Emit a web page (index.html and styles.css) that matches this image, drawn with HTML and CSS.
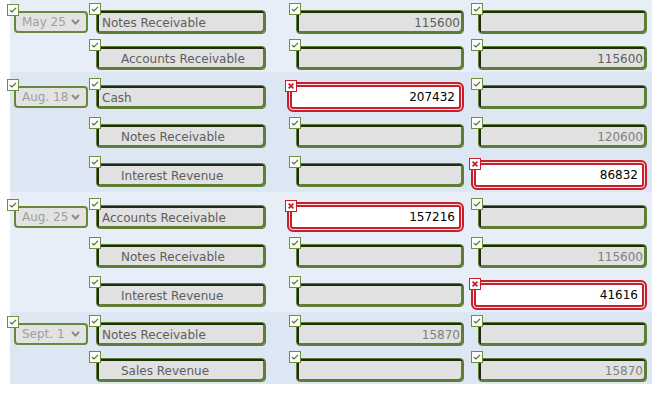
FILE: index.html
```html
<!DOCTYPE html>
<html lang="en">
<head>
    <meta charset="UTF-8">
    <title>Journal Entries</title>
    <link rel="stylesheet" href="styles.css">
</head>
<body>
    <svg class="defs" width="0" height="0">
        <symbol id="ok" viewBox="0 0 12 12">
            <rect x="0.5" y="0.5" width="11" height="11" fill="#fbfdf6" stroke="#6d8f3e"/>
            <path d="M3 6.2 L5 8 L9 3.8" fill="none" stroke="#5b6b4a" stroke-width="1.2"/>
        </symbol>
        <symbol id="bad" viewBox="0 0 12 12">
            <rect x="0.5" y="0.5" width="11" height="11" fill="#fff" stroke="#c8202b"/>
            <path d="M3.6 3.6 L8.4 8.4 M8.4 3.6 L3.6 8.4" fill="none" stroke="#c8202b" stroke-width="1.8"/>
        </symbol>
        <symbol id="chev" viewBox="0 0 9 6">
            <path d="M1 1 L4.5 4.6 L8 1" fill="none" stroke="#8a8a8a" stroke-width="2"/>
        </symbol>
    </svg>

    <div class="journal">
        <!-- May 25 -->
        <div class="entry alt">
            <div class="line">
                <div class="cell"><span class="fld"><svg class="mark"><use href="#ok"/></svg><div class="date">May 25<svg class="chev"><use href="#chev"/></svg></div></span></div>
                <div class="cell"><span class="fld"><svg class="mark"><use href="#ok"/></svg><div class="box acct">Notes Receivable</div></span></div>
                <div class="cell"><span class="fld"><svg class="mark"><use href="#ok"/></svg><div class="box num">115600</div></span></div>
                <div class="cell"><span class="fld"><svg class="mark"><use href="#ok"/></svg><div class="box num cr"></div></span></div>
            </div>
            <div class="line">
                <div class="cell"></div>
                <div class="cell"><span class="fld"><svg class="mark"><use href="#ok"/></svg><div class="box acct indent">Accounts Receivable</div></span></div>
                <div class="cell"><span class="fld"><svg class="mark"><use href="#ok"/></svg><div class="box num"></div></span></div>
                <div class="cell"><span class="fld"><svg class="mark"><use href="#ok"/></svg><div class="box num cr">115600</div></span></div>
            </div>
        </div>

        <!-- Aug. 18 -->
        <div class="entry">
            <div class="line">
                <div class="cell"><span class="fld"><svg class="mark"><use href="#ok"/></svg><div class="date">Aug. 18<svg class="chev"><use href="#chev"/></svg></div></span></div>
                <div class="cell"><span class="fld"><svg class="mark"><use href="#ok"/></svg><div class="box acct">Cash</div></span></div>
                <div class="cell"><span class="fld err"><svg class="mark"><use href="#bad"/></svg><div class="box num wrong">207432</div></span></div>
                <div class="cell"><span class="fld"><svg class="mark"><use href="#ok"/></svg><div class="box num cr"></div></span></div>
            </div>
            <div class="line">
                <div class="cell"></div>
                <div class="cell"><span class="fld"><svg class="mark"><use href="#ok"/></svg><div class="box acct indent">Notes Receivable</div></span></div>
                <div class="cell"><span class="fld"><svg class="mark"><use href="#ok"/></svg><div class="box num"></div></span></div>
                <div class="cell"><span class="fld"><svg class="mark"><use href="#ok"/></svg><div class="box num cr light">120600</div></span></div>
            </div>
            <div class="line">
                <div class="cell"></div>
                <div class="cell"><span class="fld"><svg class="mark"><use href="#ok"/></svg><div class="box acct indent">Interest Revenue</div></span></div>
                <div class="cell"><span class="fld"><svg class="mark"><use href="#ok"/></svg><div class="box num"></div></span></div>
                <div class="cell"><span class="fld err"><svg class="mark"><use href="#bad"/></svg><div class="box num cr wrong">86832</div></span></div>
            </div>
        </div>

        <!-- Aug. 25 -->
        <div class="entry alt">
            <div class="line">
                <div class="cell"><span class="fld"><svg class="mark"><use href="#ok"/></svg><div class="date">Aug. 25<svg class="chev"><use href="#chev"/></svg></div></span></div>
                <div class="cell"><span class="fld"><svg class="mark"><use href="#ok"/></svg><div class="box acct">Accounts Receivable</div></span></div>
                <div class="cell"><span class="fld err"><svg class="mark"><use href="#bad"/></svg><div class="box num wrong">157216</div></span></div>
                <div class="cell"><span class="fld"><svg class="mark"><use href="#ok"/></svg><div class="box num cr"></div></span></div>
            </div>
            <div class="line">
                <div class="cell"></div>
                <div class="cell"><span class="fld"><svg class="mark"><use href="#ok"/></svg><div class="box acct indent">Notes Receivable</div></span></div>
                <div class="cell"><span class="fld"><svg class="mark"><use href="#ok"/></svg><div class="box num"></div></span></div>
                <div class="cell"><span class="fld"><svg class="mark"><use href="#ok"/></svg><div class="box num cr light">115600</div></span></div>
            </div>
            <div class="line">
                <div class="cell"></div>
                <div class="cell"><span class="fld"><svg class="mark"><use href="#ok"/></svg><div class="box acct indent">Interest Revenue</div></span></div>
                <div class="cell"><span class="fld"><svg class="mark"><use href="#ok"/></svg><div class="box num"></div></span></div>
                <div class="cell"><span class="fld err"><svg class="mark"><use href="#bad"/></svg><div class="box num cr wrong">41616</div></span></div>
            </div>
        </div>

        <!-- Sept. 1 -->
        <div class="entry">
            <div class="line">
                <div class="cell"><span class="fld"><svg class="mark"><use href="#ok"/></svg><div class="date">Sept. 1<svg class="chev"><use href="#chev"/></svg></div></span></div>
                <div class="cell"><span class="fld"><svg class="mark"><use href="#ok"/></svg><div class="box acct">Notes Receivable</div></span></div>
                <div class="cell"><span class="fld"><svg class="mark"><use href="#ok"/></svg><div class="box num light">15870</div></span></div>
                <div class="cell"><span class="fld"><svg class="mark"><use href="#ok"/></svg><div class="box num cr"></div></span></div>
            </div>
            <div class="line">
                <div class="cell"></div>
                <div class="cell"><span class="fld"><svg class="mark"><use href="#ok"/></svg><div class="box acct indent">Sales Revenue</div></span></div>
                <div class="cell"><span class="fld"><svg class="mark"><use href="#ok"/></svg><div class="box num"></div></span></div>
                <div class="cell"><span class="fld"><svg class="mark"><use href="#ok"/></svg><div class="box num cr light">15870</div></span></div>
            </div>
        </div>
    </div>
</body>
</html>
```

FILE: styles.css
```css
body {
    margin: 0;
    background-color: #fff;
    font-family: "DejaVu Sans", Verdana, sans-serif;
    font-size: 12px;
}
.defs {
    position: absolute;
}
.journal {
    margin-left: 10px;
    width: 642px;
}
.entry {
    background-color: #dde7f4;
}
.entry.alt {
    background-color: #e8eef8;
}
.line {
    display: grid;
    grid-template-columns: 78px 178px 198px 183px;
    padding: 10px 5px 2px 0;
    align-items: center;
}
.cell {
    display: flex;
    justify-content: flex-end;
}
.fld {
    position: relative;
    display: block;
}
.mark {
    position: absolute;
    left: -7px;
    top: -7px;
    width: 12px;
    height: 12px;
}
.fld.err .mark {
    left: -2px;
    top: -2px;
}
.date {
    box-sizing: border-box;
    width: 74px;
    height: 22px;
    border: 2px solid #67883a;
    border-radius: 4px;
    background-color: #e3e3e3;
    color: #a0a0a0;
    padding: 0 6px 0 6px;
    line-height: 18px;
    display: flex;
    justify-content: space-between;
    align-items: center;
}
.chev {
    width: 9px;
    height: 6px;
}
.box {
    box-sizing: border-box;
    width: 168px;
    height: 24px;
    border: 1px solid #5e7d35;
    border-radius: 4px;
    box-shadow: inset 2px 2px 0 #1f2c14, inset -2px -2px 0 #5e7d35;
    background-color: #e1e1e1;
    color: #5e5e5e;
    line-height: 22px;
    padding: 1px 3px 0 5px;
    white-space: nowrap;
    overflow: hidden;
}
.acct {
    width: 170px;
}
.acct.indent {
    padding-left: 24px;
}
.num {
    text-align: right;
}
.box.cr {
    width: 169px;
}
.box.light {
    color: #808080;
}
.box.wrong {
    width: 177px;
    height: 30px;
    border: 2px solid #c8202b;
    border-radius: 6px;
    box-shadow: inset 0 0 0 1px #f9e3e4, inset 0 0 0 3px #c8202b;
    background-color: #fff;
    color: #000;
    line-height: 26px;
    padding: 0 7px 0 5px;
}
.box.cr.wrong {
    width: 176px;
}
```
